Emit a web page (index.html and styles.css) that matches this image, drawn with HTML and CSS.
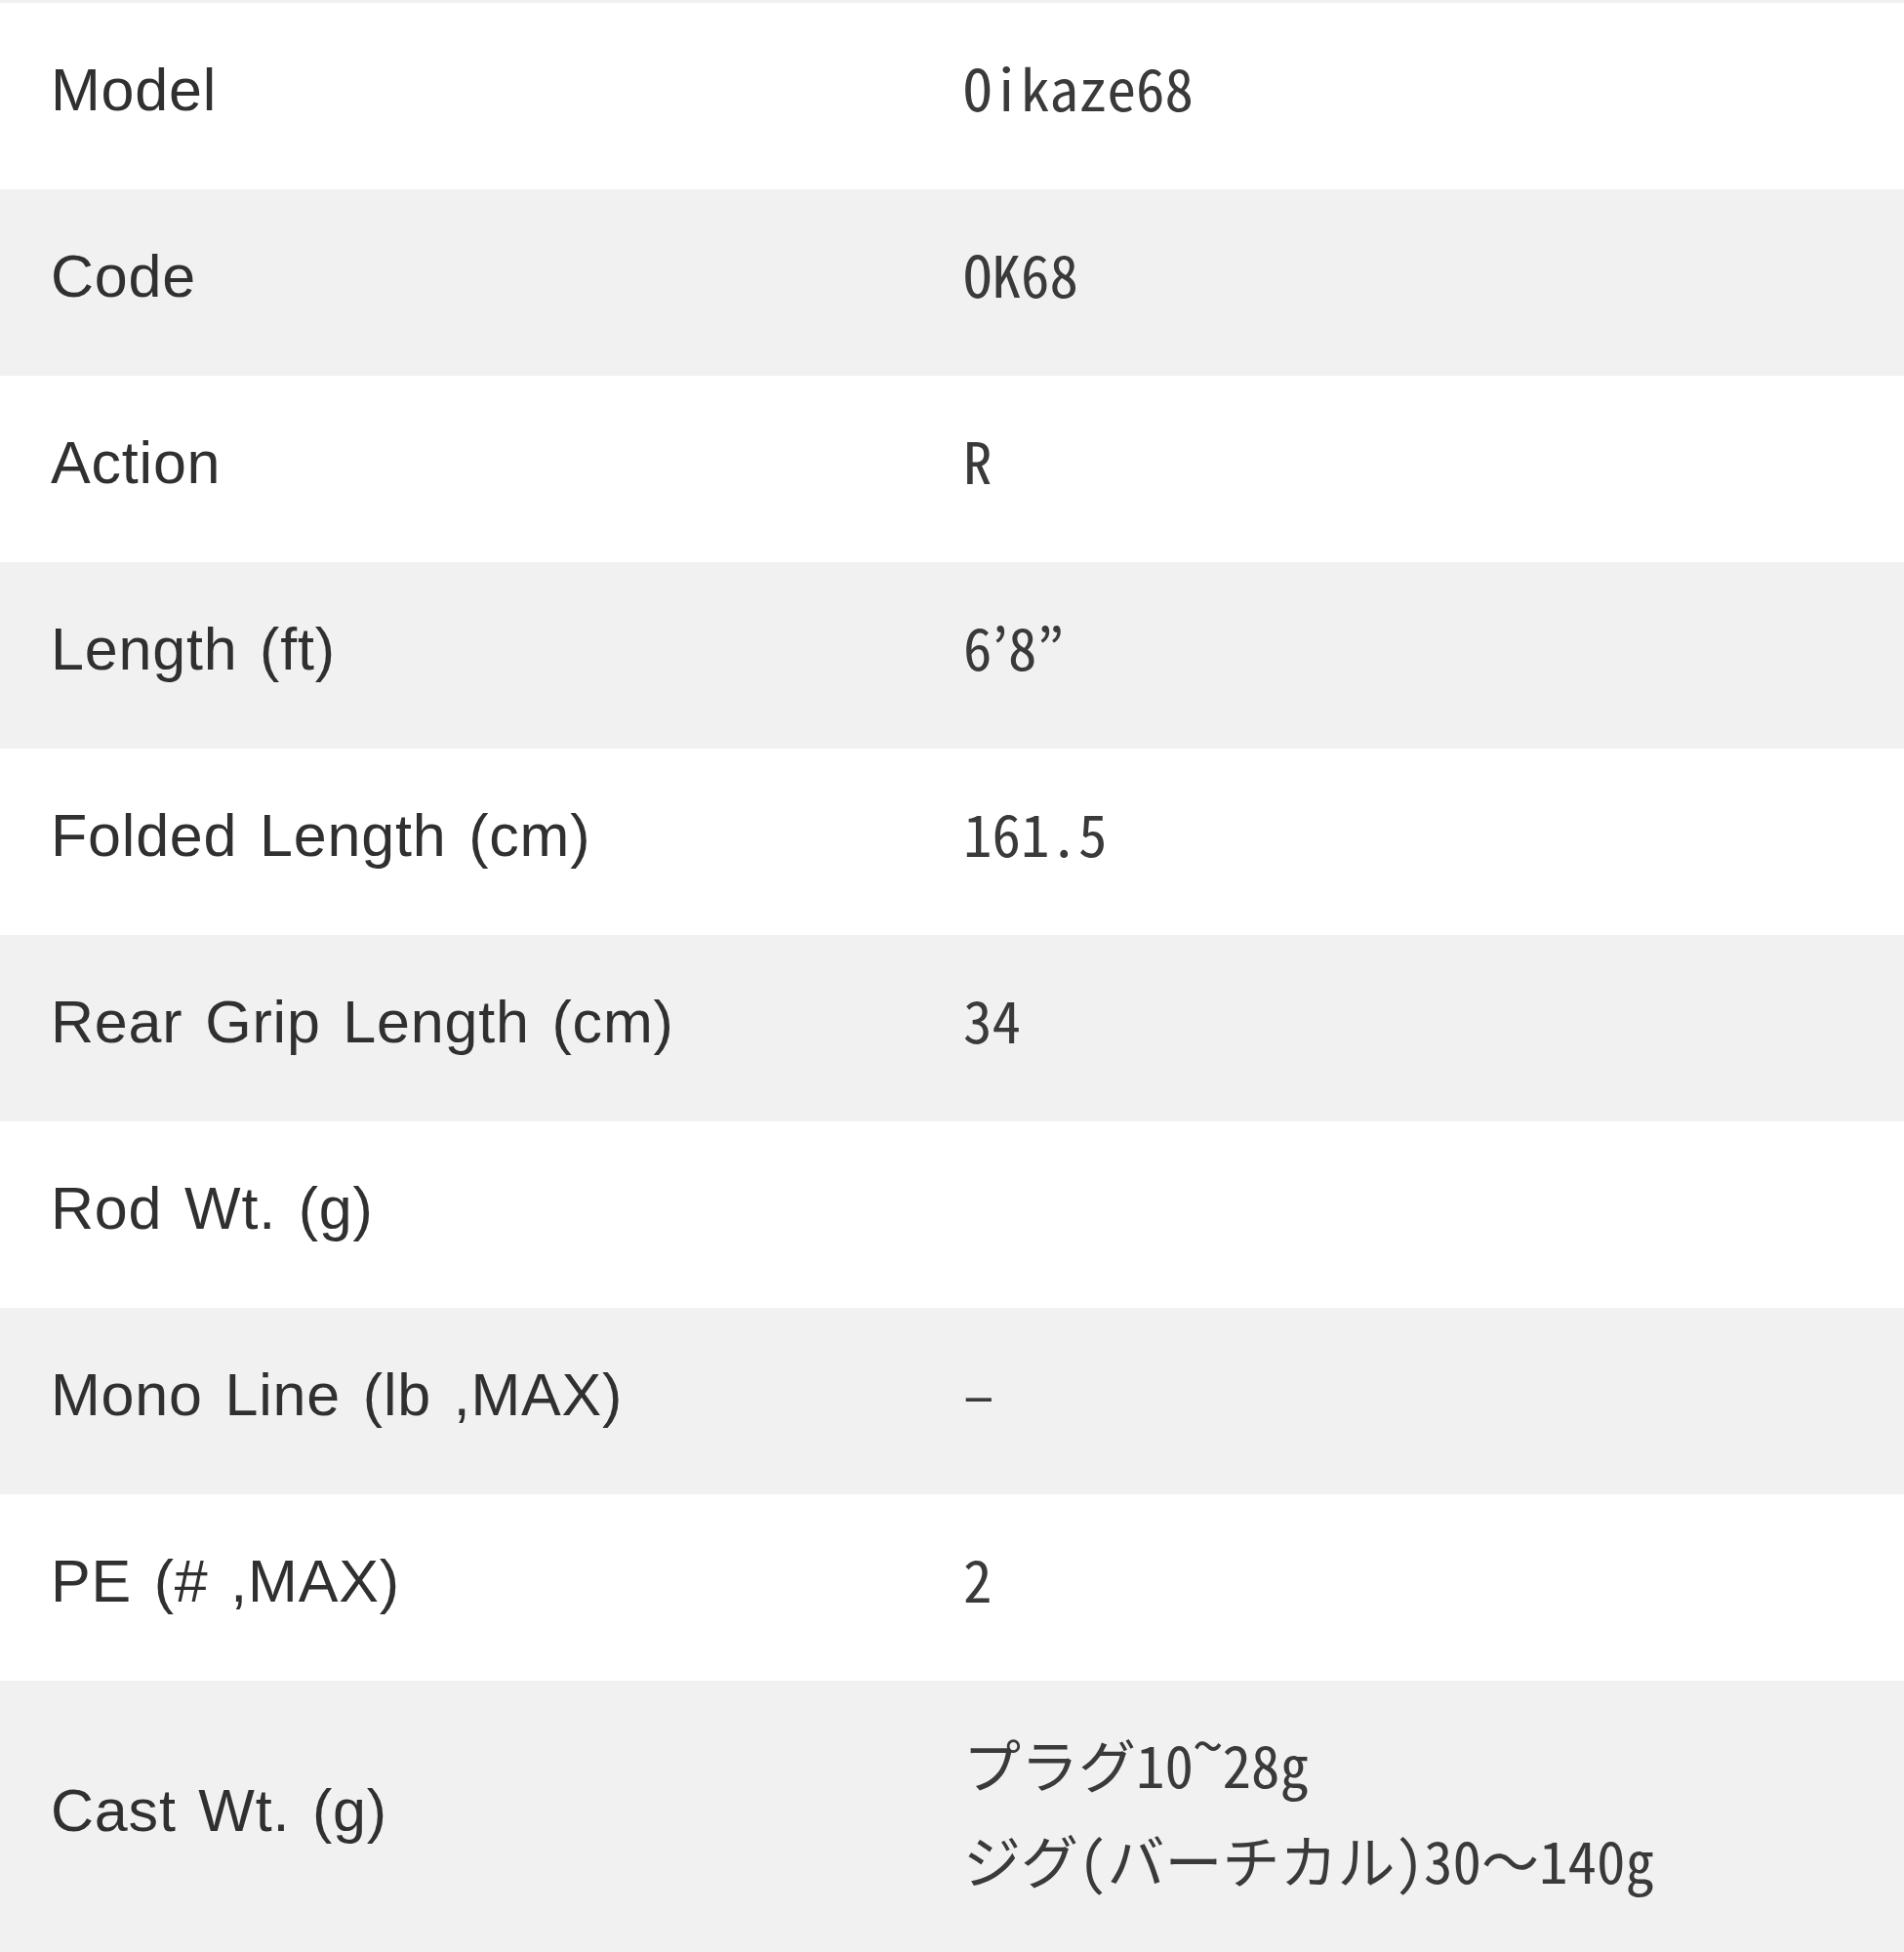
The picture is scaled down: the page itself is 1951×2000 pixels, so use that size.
FILE: index.html
```html
<!DOCTYPE html>
<html lang="ja">
<head>
<meta charset="utf-8">
<title>Spec</title>
<link rel="stylesheet" href="styles.css">
</head>
<body>
<div class="spec">
  <div class="row"><div class="label">Model</div><div class="value">Oikaze68</div></div>
  <div class="row alt"><div class="label">Code</div><div class="value">OK68</div></div>
  <div class="row"><div class="label">Action</div><div class="value">R</div></div>
  <div class="row alt"><div class="label">Length (ft)</div><div class="value">6’8”</div></div>
  <div class="row"><div class="label">Folded Length (cm)</div><div class="value">161.5</div></div>
  <div class="row alt"><div class="label">Rear Grip Length (cm)</div><div class="value">34</div></div>
  <div class="row"><div class="label">Rod Wt. (g)</div><div class="value"></div></div>
  <div class="row alt"><div class="label">Mono Line (lb ,MAX)</div><div class="value">–</div></div>
  <div class="row"><div class="label">PE (# ,MAX)</div><div class="value">2</div></div>
  <div class="row alt tall"><div class="label">Cast Wt. (g)</div><div class="value multi">プラグ10<span class="tilde">~</span>28g<br>ジグ(バーチカル)30～140g</div></div>
</div>
</body>
</html>
```

FILE: styles.css
```css
html, body {
  margin: 0;
  padding: 0;
  background: #ffffff;
}

.spec {
  border-top: 3px solid #f1f1f1;
  color: #303030;
}

.row {
  display: grid;
  grid-template-columns: 935px 1fr;
  height: 191px;
  align-items: center;
  background: #ffffff;
}

.row.alt {
  background: #f1f1f1;
}

.row.tall {
  height: 280px;
}

.label {
  padding-left: 52px;
  padding-bottom: 14px;
  font-family: "Liberation Sans", Arial, sans-serif;
  font-size: 61px;
  line-height: 70px;
  letter-spacing: 0.8px;
  word-spacing: 5px;
  white-space: nowrap;
}

.value {
  padding-left: 52px;
  padding-bottom: 20px;
  font-family: "Noto Sans Mono CJK JP", "Noto Sans CJK JP", "Liberation Mono", monospace;
  font-size: 59px;
  line-height: 70px;
  color: #3a3a3a;
  white-space: nowrap;
}

.value.multi {
  line-height: 98px;
  padding-bottom: 12px;
}

.tilde {
  display: inline-block;
  transform: translateY(-0.35em);
}
```
